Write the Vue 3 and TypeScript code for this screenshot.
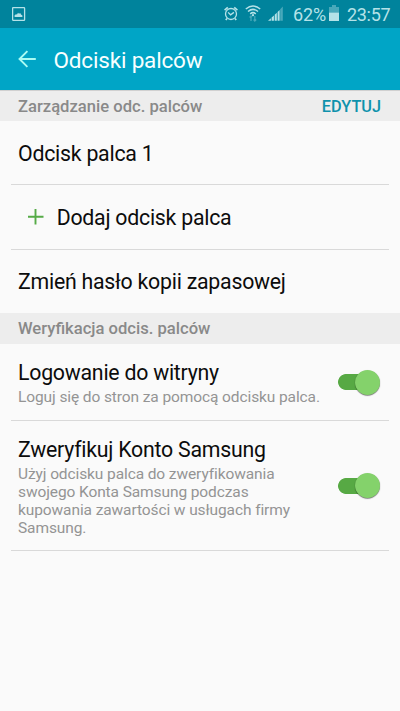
<script setup lang="ts">
import { ref } from 'vue'

interface Toggle {
  id: string
  title: string
  lines: string[]
  on: boolean
}

const toggles = ref<Toggle[]>([
  {
    id: 'web',
    title: 'Logowanie do witryny',
    lines: ['Loguj się do stron za pomocą odcisku palca.'],
    on: true,
  },
  {
    id: 'account',
    title: 'Zweryfikuj Konto Samsung',
    lines: [
      'Użyj odcisku palca do zweryfikowania',
      'swojego Konta Samsung podczas',
      'kupowania zawartości w usługach firmy',
      'Samsung.',
    ],
    on: true,
  },
])
</script>

<template>
  <div class="screen">
    <div class="status">
      <svg class="photo" width="14" height="14" viewBox="0 0 14 14">
        <rect x="0.6" y="0.6" width="12" height="12.8" rx="0.8" fill="none" stroke="currentColor" stroke-width="1.3" />
        <path d="M2.6 10V8.2L4 7.2 5 7.6 6 5.8 7 6.8 8.2 6 9 7.4 10.4 8.4V10Z" fill="currentColor" />
      </svg>
      <svg class="alarm" width="14" height="15" viewBox="0 0 14 15" fill="none" stroke="currentColor">
        <circle cx="7" cy="8" r="5.5" stroke-width="1.3" />
        <path d="M4.1 6.4 6.6 8.8 9.9 6.4" stroke-width="1.3" />
        <path d="M0.6 4.2 3.8 1.4M13.4 4.2 10.2 1.4M3 12.5 1.8 14M11 12.5 12.2 14" stroke-width="1.7" />
      </svg>
      <svg class="wifi" width="16" height="17" viewBox="0 0 16 17" fill="none" stroke="currentColor">
        <path d="M0.8 4Q8 -1.9 15.2 4M3 6.5Q8 2.3 13 6.5M5.2 8.8Q8 6.5 10.8 8.8" stroke-width="1.5" />
        <circle cx="8" cy="10.2" r="1.1" fill="currentColor" stroke="none" />
        <path d="M6 16V11M4.6 12.5 6 11 7 12.2M9.8 11V16M8.6 14.6 9.8 16 11.2 14.6" stroke-width="1.3" opacity="0.4" />
      </svg>
      <svg class="signal" width="15" height="15" viewBox="0 0 15 15" fill="currentColor">
        <path d="M0 14.8 2.9 12.2V14.8ZM3.6 11.6 5.9 9.6V14.8H3.6ZM6.7 8.8 8.8 6.7V14.8H6.7ZM9.6 5.9 11.6 3.9V14.8H9.6Z" />
        <path d="M12.2 3.2 14.8 0.6V14.8H12.2Z" opacity="0.4" />
      </svg>
      <span class="percent">62%</span>
      <svg class="battery" width="10" height="16" viewBox="0 0 10 16" fill="currentColor">
        <path d="M3 0H7V2H10V7.5H0V2H3Z" opacity="0.4" />
        <rect y="7.5" width="10" height="8.5" />
      </svg>
      <span class="clock">23:57</span>
    </div>

    <header class="appbar">
      <svg width="19" height="18" viewBox="0 0 19 18" fill="none" stroke="#a9fbf3" stroke-width="1.9">
        <path d="M17.8 9H1.5M9.4 1.1 1.5 9 9.4 16.9" />
      </svg>
      <h1>Odciski palców</h1>
    </header>

    <div class="section first">
      <span class="manage">Zarządzanie odc. palców</span>
      <span class="edit">EDYTUJ</span>
    </div>
    <div class="row finger"><span class="name">Odcisk palca 1</span></div>
    <div class="row add">
      <svg width="16" height="16" viewBox="0 0 16 16" stroke="#56ab47" stroke-width="1.9">
        <path d="M7.5 0V15.5M0 7.7H15.5" />
      </svg>
      <span class="name">Dodaj odcisk palca</span>
    </div>
    <div class="row backup"><span class="name">Zmień hasło kopii zapasowej</span></div>

    <div class="section second"><span class="verify">Weryfikacja odcis. palców</span></div>
    <div v-for="t in toggles" :key="t.id" class="row setting" :class="t.id">
      <div class="text">
        <div class="name">{{ t.title }}</div>
        <div v-for="line in t.lines" :key="line" class="desc">{{ line }}</div>
      </div>
      <div class="switch" :class="{ on: t.on }" @click="t.on = !t.on"><i class="knob"></i></div>
    </div>
  </div>
</template>

<style>
body {
  background: #fafafa;
}
</style>

<style scoped>
.screen {
  width: 400px;
  height: 711px;
  overflow: hidden;
  background: #fafafa;
  color: #0c0c0c;
  font-family: Roboto, sans-serif;
  white-space: nowrap;
}
.status {
  box-sizing: border-box;
  height: 28px;
  display: flex;
  align-items: flex-start;
  padding: 0 9px 0 12px;
  background: #00839c;
  color: #b5e2e8;
}
.status svg {
  display: block;
  flex: none;
}
.photo { margin-top: 7px; }
.alarm { margin: 6px 0 0 198px; }
.wifi { margin: 5px 0 0 7px; }
.signal { margin: 6px 0 0 7px; }
.battery { margin: 5px 0 0 3px; }
.percent,
.clock {
  font-size: 18px;
  line-height: 20px;
  margin-top: 5px;
}
.percent {
  margin-left: 10px;
  letter-spacing: -0.15px;
}
.clock {
  margin-left: 8px;
  letter-spacing: -0.3px;
}
.appbar {
  box-sizing: border-box;
  height: 62px;
  display: flex;
  align-items: center;
  padding: 0 0 1px 18px;
  background: #00a5c6;
}
h1 {
  margin: 2px 0 0 16.5px;
  font-size: 22.5px;
  line-height: 28px;
  letter-spacing: -0.17px;
  font-weight: 400;
  color: #f7ffff;
}
.section {
  box-sizing: border-box;
  height: 31px;
  display: flex;
  align-items: center;
  justify-content: space-between;
  padding: 0 19px 0 18px;
  background: #ededed;
  color: #898989;
  font-size: 16.6px;
  font-weight: 500;
}
.first { border-top: 1px solid #d0d0d0; }
.edit {
  color: #0f92ac;
  font-size: 16.3px;
}
.row {
  box-sizing: border-box;
  margin: 0 11px;
  padding: 0 7px;
  display: flex;
  align-items: center;
  border-bottom: 1px solid #d9d9d9;
}
.name {
  font-size: 21.3px;
  line-height: 26px;
  letter-spacing: -0.24px;
}
.finger {
  height: 64px;
  padding-top: 2px;
}
.add {
  height: 65px;
  padding-left: 17px;
}
.add .name {
  margin: 2px 0 0 12.7px;
}
.backup {
  height: 63px;
  border: 0;
}
.setting {
  justify-content: space-between;
  padding-right: 9px;
}
.web { height: 77px; }
.account { height: 130px; }
.text { margin-top: 2px; }
.text .name {
  margin-bottom: 2px;
}
.desc {
  font-size: 15.5px;
  line-height: 18px;
  letter-spacing: -0.1px;
  color: #949494;
}
.switch {
  flex: none;
  width: 42px;
  height: 26px;
  display: flex;
  align-items: center;
  background: linear-gradient(#b5b5b5, #b5b5b5) 0 50% / 36px 16px no-repeat;
}
.switch.on {
  justify-content: flex-end;
  background: radial-gradient(circle at 8px 13px, #57a944 7.5px, transparent 8.3px) no-repeat,
    linear-gradient(#57a944, #57a944) 8px 5px / 24px 16px no-repeat;
}
.knob {
  width: 25px;
  height: 25px;
  border-radius: 50%;
  background: #84d26b;
  box-shadow: 0 0.7px 1px rgba(0, 0, 0, 0.55);
}
</style>
